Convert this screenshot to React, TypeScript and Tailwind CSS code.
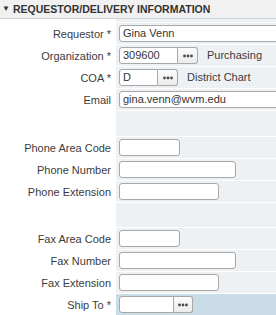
import React from 'react';

const Dots: React.FC = () => (
  <svg width="10" height="4" viewBox="0 0 10 4">
    <circle cx="1.5" cy="2" r="1.4" fill="#4a4a4a" />
    <circle cx="5" cy="2" r="1.4" fill="#4a4a4a" />
    <circle cx="8.5" cy="2" r="1.4" fill="#4a4a4a" />
  </svg>
);

const Row: React.FC<{ label?: string; tall?: number; blue?: boolean; children?: React.ReactNode }> = ({
  label,
  tall,
  blue,
  children,
}) => (
  <div className="flex" style={tall ? { height: tall } : undefined}>
    <div className={`w-[116px] shrink-0 flex items-center justify-end pr-[5px] text-[#3c3c3c] ${tall ? '' : 'h-[22px]'}`}>
      {label}
    </div>
    <div
      className={`flex-1 flex items-center pl-[3px] border-b border-white ${blue ? 'bg-[#c9dce8]' : 'bg-[#eef1f4]'} ${
        tall ? '' : 'h-[22px]'
      }`}
    >
      {children}
    </div>
  </div>
);

const Field: React.FC<{ w: string; value?: string }> = ({ w, value }) => (
  <div
    className={`${w} h-[17px] shrink-0 border border-[#a8a8a8] rounded-[3px] bg-white px-[3px] flex items-center text-[#333] whitespace-nowrap overflow-hidden`}
  >
    {value}
  </div>
);

const Lookup: React.FC<{ w: string; value?: string; btn?: string }> = ({ w, value, btn = 'w-[20px]' }) => (
  <div className="flex shrink-0">
    <div
      className={`${w} h-[17px] border border-[#a8a8a8] rounded-l-[3px] bg-white px-[3px] flex items-center text-[#333] whitespace-nowrap`}
    >
      {value}
    </div>
    <div
      className={`${btn} h-[17px] border border-l-0 border-[#a8a8a8] rounded-r-[3px] bg-gradient-to-b from-[#fbfbfb] to-[#ececec] flex items-center justify-center`}
    >
      <Dots />
    </div>
  </div>
);

export default function App() {
  return (
    <div className="w-[276px] h-[315px] overflow-hidden bg-white text-[11px] leading-none" style={{ fontFamily: '"Liberation Sans", Arial, sans-serif' }}>
      <div className="h-[19px] bg-[#f1f1f1] border-b border-[#cfcfcf] flex items-center pl-[2px] gap-[3px] font-bold text-[10.5px] text-[#333] whitespace-nowrap">
        <span className="text-[8px]">▼</span>
        <span>REQUESTOR/DELIVERY INFORMATION</span>
      </div>
      <Row tall={4} />
      <Row label="Requestor *">
        <Field w="w-[170px]" value="Gina Venn" />
      </Row>
      <Row label="Organization *">
        <Lookup w="w-[59px]" value="309600" />
        <span className="ml-[9px] text-[#3c3c3c] whitespace-nowrap">Purchasing</span>
      </Row>
      <Row label="COA *">
        <Lookup w="w-[39px]" value="D" />
        <span className="ml-[9px] text-[#3c3c3c] whitespace-nowrap">District Chart</span>
      </Row>
      <Row label="Email">
        <Field w="w-[170px]" value="gina.venn@wvm.edu" />
      </Row>
      <Row tall={26} />
      <Row label="Phone Area Code">
        <Field w="w-[61px]" />
      </Row>
      <Row label="Phone Number">
        <Field w="w-[117px]" />
      </Row>
      <Row label="Phone Extension">
        <Field w="w-[100px]" />
      </Row>
      <Row tall={25} />
      <Row label="Fax Area Code">
        <Field w="w-[61px]" />
      </Row>
      <Row label="Fax Number">
        <Field w="w-[117px]" />
      </Row>
      <Row label="Fax Extension">
        <Field w="w-[100px]" />
      </Row>
      <Row label="Ship To *" blue>
        <Lookup w="w-[55px]" btn="w-[19px]" />
      </Row>
    </div>
  );
}
